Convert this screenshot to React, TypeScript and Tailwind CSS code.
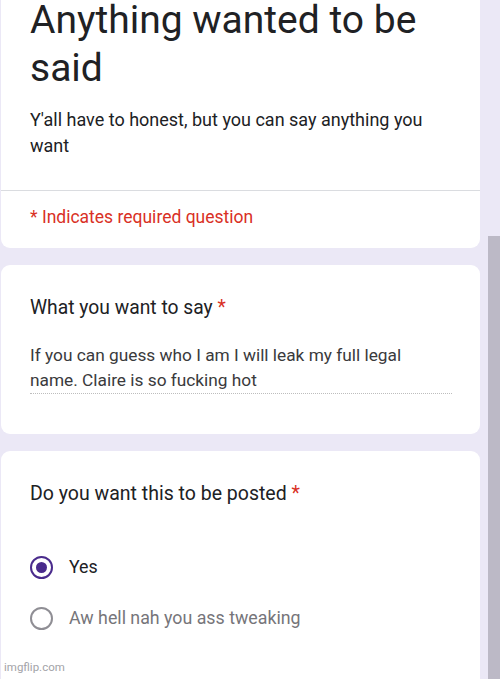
import type { ReactNode } from "react";

function Card({ children, className = "" }: { children: ReactNode; className?: string }) {
  return <div className={`rounded-[9px] bg-white ${className}`}>{children}</div>;
}

function Radio({ label, checked }: { label: string; checked?: boolean }) {
  return (
    <div className="flex items-center gap-[16px]">
      <span
        className={`flex h-[23px] w-[23px] items-center justify-center rounded-full border-[2.5px] ${
          checked ? "border-[#4a2b8c]" : "border-[#8f8e94]"
        }`}
      >
        {checked && <span className="h-[11px] w-[11px] rounded-full bg-[#4a2b8c]" />}
      </span>
      <span className={`text-[17.8px] ${checked ? "text-[#202124]" : "text-[#76757a]"}`}>{label}</span>
    </div>
  );
}

export default function App() {
  return (
    <div
      className="relative h-[679px] w-[500px] overflow-hidden bg-[#ebe8f6]"
      style={{ fontFamily: "Roboto, 'Noto Sans', sans-serif" }}
    >
      <div className="-mt-[30px] ml-[1px] flex w-[479px] flex-col gap-[17px]">
        <Card className="pt-[26px]">
          <div className="px-[29px]">
            <h1 className="text-[39px] leading-[48px] text-[#202124]">Anything wanted to be said</h1>
            <p className="mt-[15px] pr-[20px] text-[18px] leading-[26px] text-[#202124]">
              Y'all have to honest, but you can say anything you want
            </p>
          </div>
          <div className="mt-[31px] border-t border-[#dadce0]" />
          <p className="px-[29px] pb-[18px] pt-[13px] text-[17.5px] leading-[26px] text-[#d93025]">
            * Indicates required question
          </p>
        </Card>

        <Card className="px-[29px] pb-[40px] pt-[30px]">
          <p className="text-[19.3px] leading-[26px] text-[#202124]">
            What you want to say <span className="text-[#d93025]">*</span>
          </p>
          <div className="mt-[22px] w-[422px] border-b border-dotted border-[#bdbdbd] pb-[1px]">
            <p className="text-[17.3px] leading-[24.5px] text-[#3a3a3c]">
              If you can guess who I am I will leak my full legal name. Claire is so fucking hot
            </p>
          </div>
        </Card>

        <Card className="h-[260px] px-[29px] pt-[30px]">
          <p className="text-[19.5px] leading-[26px] text-[#202124]">
            Do you want this to be posted <span className="text-[#d93025]">*</span>
          </p>
          <div className="mt-[47px] flex flex-col gap-[24px]">
            <Radio label="Yes" checked />
            <Radio label="Aw hell nah you ass tweaking" />
          </div>
        </Card>
      </div>

      <div className="absolute bottom-0 right-0 top-[236px] w-[12px] bg-[#bcb9c6]" />
      <span className="absolute bottom-[3px] left-[4px] text-[11.5px] text-[#a3a3a8]">imgflip.com</span>
    </div>
  );
}
